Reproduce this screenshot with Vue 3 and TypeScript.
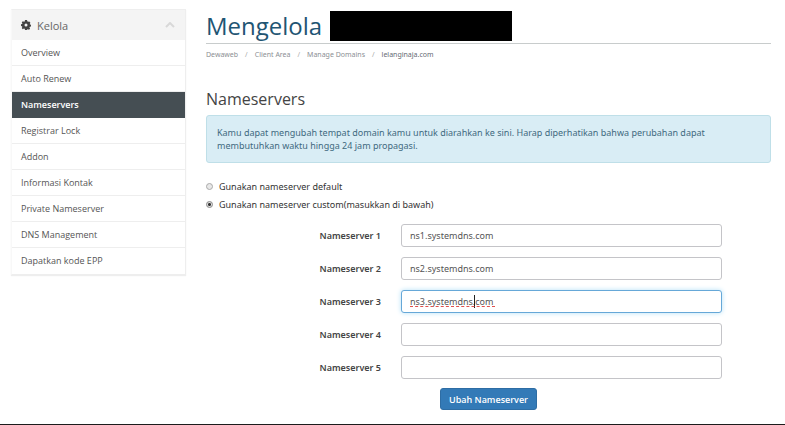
<script setup lang="ts">
import { ref } from 'vue'

const menu = ['Overview', 'Auto Renew', 'Nameservers', 'Registrar Lock', 'Addon', 'Informasi Kontak', 'Private Nameserver', 'DNS Management', 'Dapatkan kode EPP']
const active = ref('Nameservers')
const crumbs = ['Dewaweb', 'Client Area', 'Manage Domains', 'lelanginaja.com']
const mode = ref<'default' | 'custom'>('custom')
const servers = ref<string[]>(['ns1.systemdns.com', 'ns2.systemdns.com', 'ns3.systemdns.com', '', ''])
const current = ref(2)
</script>

<template>
  <div class="page">
    <aside class="sidebar">
      <div class="panel-head">
        <svg class="gear" viewBox="0 0 20 20" aria-hidden="true">
          <path fill-rule="evenodd" d="M8 0h4l.6 2.600 1.600.7L16.500 3l2.300 2.600-1.300 2.200.6 1.200 1.900.5v3.500l-2.300.6-.8 1.600 1.300 2.300-2.200 2.200-2.200-1.400-1.600.6L12 20H8l-.6-2.300-1.600-.6L3.600 18.400l-2.200-2.200 1.300-2.300-.8-1.300L0 12V8.500l2.200-.5.6-1.200L1.500 4.600 3.800 2.300l2.200 1.300 1.400-.6zM10 7a3 3 0 1 0 0 6 3 3 0 0 0 0-6z" />
        </svg>
        <span class="panel-title">Kelola</span>
        <svg class="chevron" viewBox="0 0 10 6" aria-hidden="true"><path d="M1 5l4-4 4 4" /></svg>
      </div>
      <nav>
        <a v-for="item in menu" :key="item" href="#" class="item" :class="{ active: item === active }" @click.prevent="active = item">{{ item }}</a>
      </nav>
    </aside>
    <main class="main">
      <h1 class="title"><span>Mengelola</span><span class="redacted"></span></h1>
      <ol class="crumbs">
        <li v-for="(crumb, i) in crumbs" :key="crumb">
          <a v-if="i < crumbs.length - 1" href="#">{{ crumb }}</a>
          <span v-else class="here">{{ crumb }}</span>
        </li>
      </ol>
      <h2 class="subtitle">Nameservers</h2>
      <p class="alert">Kamu dapat mengubah tempat domain kamu untuk diarahkan ke sini. Harap diperhatikan bahwa perubahan dapat membutuhkan waktu hingga 24 jam propagasi.</p>
      <form @submit.prevent>
        <div class="choices">
          <label class="choice"><input v-model="mode" type="radio" name="mode" value="default">Gunakan nameserver default</label>
          <label class="choice"><input v-model="mode" type="radio" name="mode" value="custom">Gunakan nameserver custom(masukkan di bawah)</label>
        </div>
        <div class="fields">
          <div v-for="(_, i) in servers" :key="i" class="row">
            <label :for="`ns${i + 1}`">Nameserver {{ i + 1 }}</label>
            <div class="control">
              <input :id="`ns${i + 1}`" v-model="servers[i]" type="text" :class="{ current: i === current }" @focus="current = i">
              <template v-if="i === 2 && current === 2">
                <span class="caret"></span>
                <span class="spelling"></span>
              </template>
            </div>
          </div>
        </div>
        <div class="actions"><button type="submit">Ubah Nameserver</button></div>
      </form>
    </main>
  </div>
</template>

<style>
body {
  background: #fff;
}
</style>

<style scoped>
.page {
  display: grid;
  grid-template-columns: minmax(120px, 175fr) 565fr;
  column-gap: 20px;
  align-items: start;
  box-sizing: border-box;
  padding: 9px 14px 14px 11px;
  border-bottom: 1px solid #1c1c1c;
  font-family: "Open Sans", "Noto Sans", sans-serif;
  font-size: 9px;
  line-height: 13px;
  color: #444;
}
.page * {
  box-sizing: border-box;
}
.sidebar {
  border: 1px solid #eee;
  border-left-color: #f8f8f8;
  box-shadow: 0 1px 1px #eee;
}
.panel-head {
  display: flex;
  align-items: center;
  gap: 6px;
  height: 30px;
  padding: 0 10px 0 9px;
  background: #f4f4f4;
}
.gear {
  width: 10px;
  height: 10px;
  fill: #444;
}
.panel-title {
  flex: 1;
  font-size: 11px;
  color: #666;
}
.chevron {
  width: 10px;
  height: 6px;
  fill: none;
  stroke: #d8d8d8;
  stroke-width: 2;
}
.item {
  display: block;
  height: 26px;
  padding: 6px 9px;
  border-bottom: 1px solid #eee;
  color: #555;
  text-decoration: none;
}
.item:last-child {
  border-bottom: 0;
}
.item.active {
  background: #454e53;
  border-color: #454e53;
  color: #fff;
  font-weight: 600;
}
.title {
  display: flex;
  align-items: center;
  gap: 8px;
  height: 35px;
  margin: 0;
  border-bottom: 1px solid #c8cccc;
  font-size: 24px;
  line-height: 32px;
  font-weight: 400;
  color: #1f5573;
}
.redacted {
  width: 182px;
  height: 30px;
  background: #000;
}
.crumbs {
  display: flex;
  margin: 0;
  padding: 5px 0 0;
  list-style: none;
  font-family: "Noto Sans", "Open Sans", sans-serif;
  font-size: 7px;
  line-height: 12px;
  color: #999;
}
.crumbs a {
  color: #8c8f94;
  text-decoration: none;
}
.crumbs .here {
  color: #666b73;
}
.crumbs li + li::before {
  content: "/";
  padding: 0 7px;
  color: #aaa;
}
.subtitle {
  margin: 26px 0 4px;
  font-size: 16px;
  line-height: 24px;
  font-weight: 400;
  color: #444;
}
.alert {
  margin: 0 0 17px;
  padding: 10px;
  border: 1px solid #bfdfe8;
  border-radius: 3px;
  background: #d9edf5;
  font-family: "Noto Sans", "Open Sans", sans-serif;
  color: #3f6a80;
}
.choices {
  display: grid;
  gap: 5px;
  font-family: "Noto Sans", "Open Sans", sans-serif;
}
.choice {
  display: flex;
  align-items: center;
  gap: 6px;
  color: #333;
}
.choice input {
  appearance: none;
  width: 7px;
  height: 7px;
  margin: 0;
  border: 1px solid #aaa;
  border-radius: 50%;
  background: #e8e8e8;
}
.choice input:checked {
  border-color: #888;
  background: radial-gradient(circle, #333 0 1px, #ddd 2px);
}
.fields {
  display: grid;
  gap: 10px;
  margin-top: 13px;
  font-family: "Noto Sans", "Open Sans", sans-serif;
}
.row {
  display: grid;
  grid-template-columns: 175fr 321fr 49fr;
  column-gap: 20px;
  align-items: center;
  margin-right: -20px;
}
.row label {
  text-align: right;
  font-weight: 600;
  color: #444;
}
.control {
  position: relative;
}
.control input {
  display: block;
  width: 100%;
  height: 23px;
  padding: 4px 8px;
  border: 1px solid #c4c4c8;
  border-radius: 3px;
  outline: 0;
  background: #fff;
  font: inherit;
  color: #555;
}
.control input.current {
  border-color: #66a8d8;
  box-shadow: 0 0 5px #b5e0f7;
}
.caret {
  position: absolute;
  top: 5px;
  left: 73px;
  width: 1px;
  height: 13px;
  background: #222;
}
.spelling {
  position: absolute;
  top: 16px;
  left: 9px;
  width: 85px;
  border-bottom: 1px dashed #e0504c;
}
.actions {
  display: flex;
  justify-content: center;
  margin-top: 9px;
}
.actions button {
  height: 22px;
  padding: 0 8px;
  border: 1px solid #2e6da4;
  border-radius: 3px;
  background: #337ab7;
  color: #fff;
  font: inherit;
  font-weight: 600;
}
</style>
